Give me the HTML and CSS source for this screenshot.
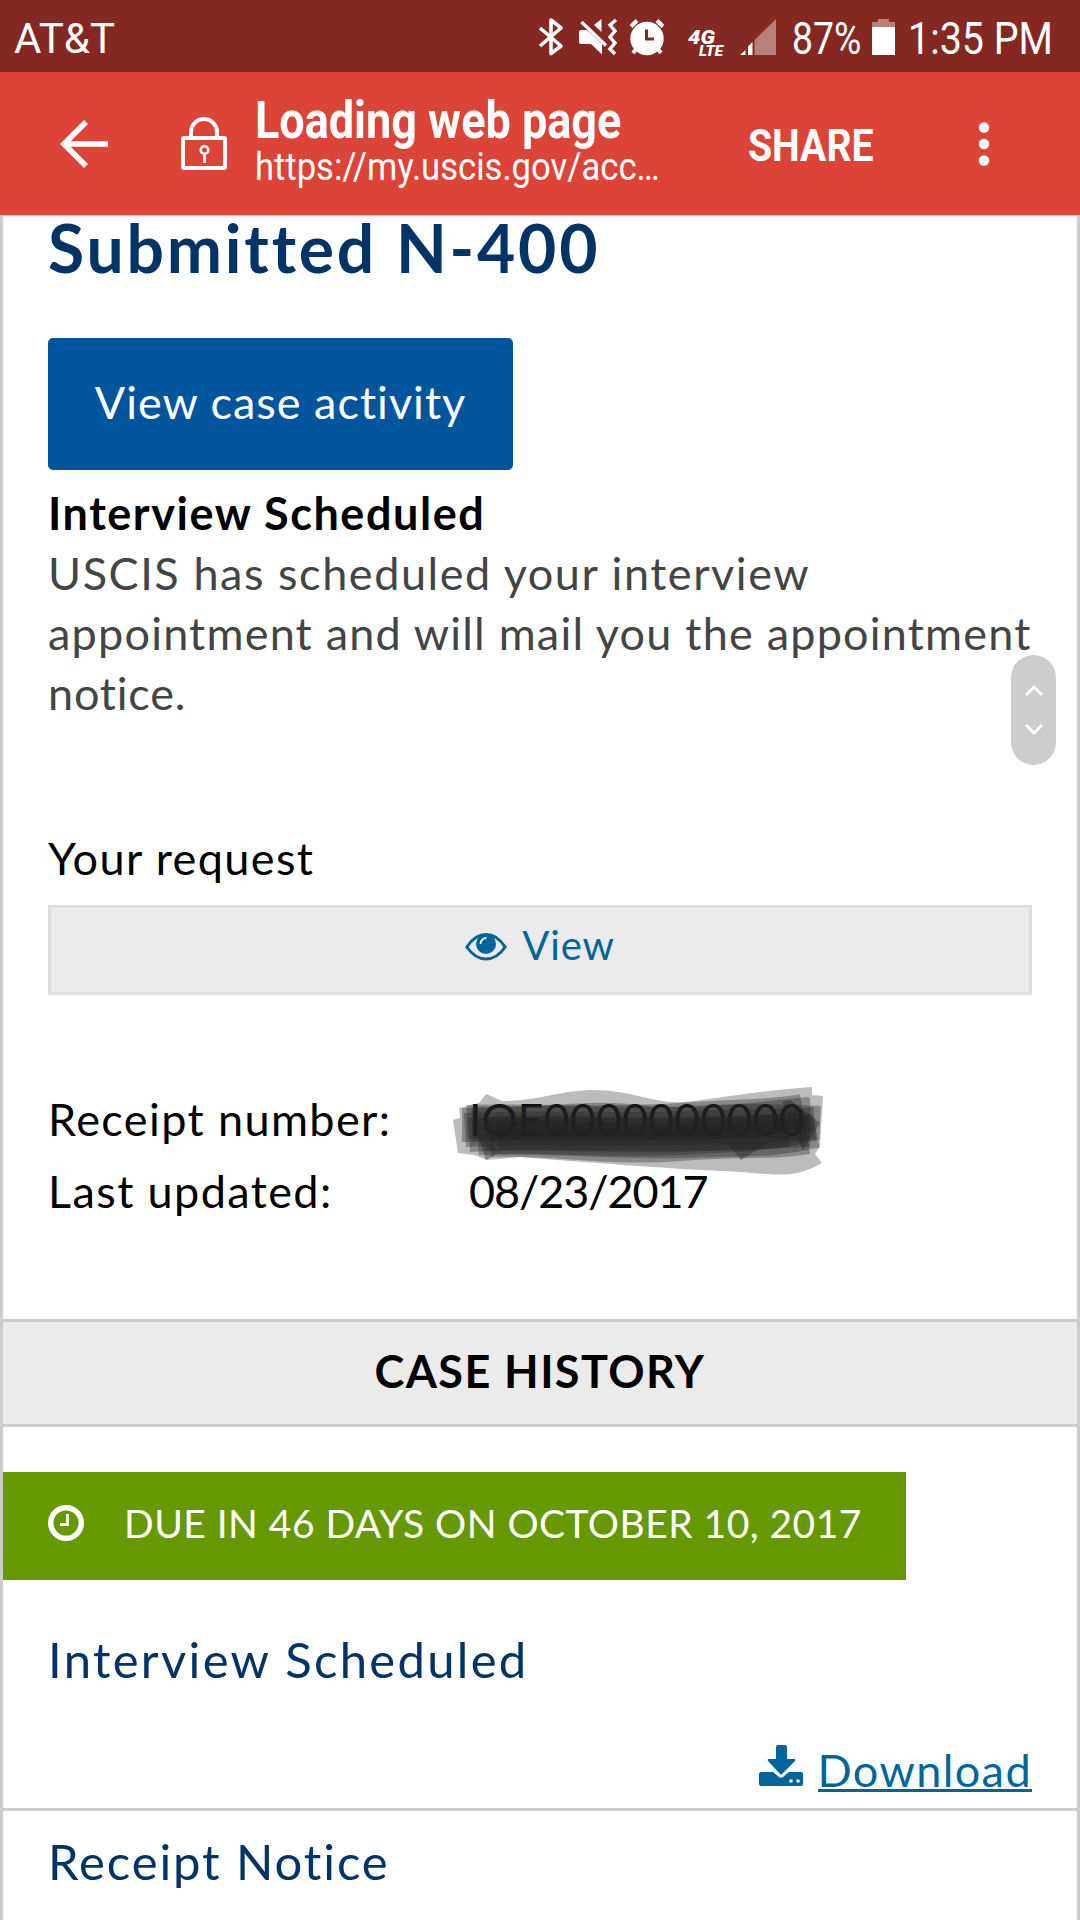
FILE: index.html
```html
<!DOCTYPE html>
<html lang="en">
<head>
    <meta charset="UTF-8">
    <meta name="viewport" content="width=device-width, initial-scale=1.0">
    <title>Submitted N-400</title>
    <link rel="stylesheet" href="styles.css">
</head>
<body>
    <div class="status-bar">
        <span class="carrier">AT&amp;T</span>
        <svg class="status-icons" width="280" height="72" viewBox="0 0 280 72">
            <path d="M20 28L41 46L31 53.500V20L41 28L20 46" fill="none" stroke="#fff" stroke-width="3.600" stroke-linejoin="round"/>
            <path d="M59 32q0-2 2-2h6l15 14v10.500L71 44h-10q-2 0-2-2zM74 25l7.500-6v13z" fill="#fff"/>
            <path d="M61.500 22L86 45.500" stroke="#fff" stroke-width="3.200"/>
            <path d="M96 20l-6 5 5 6-5 6 5 6-5 6 5 5" fill="none" stroke="#fff" stroke-width="3.400"/>
            <circle cx="127" cy="38.500" r="16.700" fill="#fff"/>
            <path d="M111 26.500l6-6M137 20.500l6 6M117 48l-4 5M137 48l4 5" stroke="#fff" stroke-width="4"/>
            <path d="M126.500 29.500v9.500h7.500" fill="none" stroke="#832922" stroke-width="3"/>
            <text x="168" y="43.500" class="net" font-size="20" textLength="27" lengthAdjust="spacingAndGlyphs">4G</text>
            <text x="179" y="55.500" class="net" font-size="14.500" textLength="24" lengthAdjust="spacingAndGlyphs">LTE</text>
            <path d="M256 19v36h-21.500V40z" fill="#b7807b"/>
            <path d="M220 55l5.500-5v5zM228 55v-8.500l4.500-4.500v13z" fill="#fff"/>
        </svg>
        <span class="percent">87%</span>
        <svg class="battery" width="23" height="37" viewBox="0 0 23 37">
            <path d="M0 3h6V0h11v3h6v5H0z" fill="#b7807b"/>
            <path d="M0 8h23v28H0z" fill="#fff"/>
        </svg>
        <span class="time">1:35 PM</span>
    </div>

    <div class="toolbar">
        <svg class="back" width="50" height="50" viewBox="0 0 50 50">
            <path d="M27 3L5 25l22 22M6 25h43" fill="none" stroke="#fff" stroke-width="5.600"/>
        </svg>
        <svg class="lock" width="46" height="54" viewBox="0 0 46 54">
            <rect x="2" y="21" width="42" height="30" rx="1" fill="none" stroke="#fff" stroke-width="4"/>
            <path d="M10 20v-5a13 13 0 0 1 26 0v5" fill="none" stroke="#fff" stroke-width="4"/>
            <circle cx="23.500" cy="33" r="3.800" fill="none" stroke="#fff" stroke-width="2.600"/>
            <path d="M23.500 36v10" stroke="#fff" stroke-width="3"/>
        </svg>
        <div class="page-info">
            <div class="page-title"><span>Loading web page</span></div>
            <div class="page-url"><span>https://my.uscis.gov/acc…</span></div>
        </div>
        <span class="share">SHARE</span>
        <svg class="more" width="12" height="46" viewBox="0 0 12 46">
            <circle cx="6" cy="6.500" r="5.200" fill="#fff"/>
            <circle cx="6" cy="23" r="5.200" fill="#fff"/>
            <circle cx="6" cy="39.500" r="5.200" fill="#fff"/>
        </svg>
    </div>

    <div class="page">
        <div class="case">
            <h1>Submitted N-400</h1>
            <a class="activity-button"><span>View case activity</span></a>
            <h2>Interview Scheduled</h2>
            <p class="description">
                <span class="line1">USCIS has scheduled your interview</span><br>
                <span class="line2">appointment and will mail you the appointment</span><br>
                <span class="line3">notice.</span>
            </p>
            <div class="label request">Your request</div>
            <a class="view-button">
                <svg width="42" height="28" viewBox="0 0 42 28">
                    <path d="M1.800 14Q10 1.500 21 1.500T40.200 14Q32 26 21 26T1.800 14z" fill="none" stroke="#069" stroke-width="3"/>
                    <circle cx="21" cy="11" r="10" fill="#069"/>
                    <path d="M15.500 11a6 6 0 0 1 6-6" fill="none" stroke="#ebebeb" stroke-width="2"/>
                </svg>
                <span>View</span>
            </a>
            <div class="details">
                <div class="row"><span class="label receipt">Receipt number:</span>
                    <span class="value hidden-number">IOE0000000000
                        <svg class="scribble" width="380" height="100" viewBox="0 0 380 100">
                            <path d="M36 10l16 7C90 17 110 6 145 6s60 14 88 12 70-11 129-15v8l11 1-3 50-5 8 7 9c-30 18-50 10-100 8S130 78 70 73L37 76 24 71 8 69 3 36l7-2-1-10 20-5z" fill="#222" fill-opacity=".3"/>
                            <g fill="none" stroke="#222" stroke-opacity=".34" stroke-width="34">
                                <path d="M12 41C90 42 140 31 190 38s110-3 171-8"/>
                                <path d="M17 38C90 36 160 41 230 36s90-3 123-9"/>
                                <path d="M22 40C110 37 170 42 240 39s80-2 130 0"/>
                                <path d="M15 46C90 42 160 47 230 44s90 0 135-4"/>
                                <path d="M19 51C90 47 160 53 230 51s90-4 130-5"/>
                                <path d="M35 50C100 46 160 52 230 50s90 0 120-7"/>
                                <path d="M28 54C100 51 160 59 230 57s90 0 136-10"/>
                                <path d="M40 56C100 53 160 66 230 60s90 0 127-7"/>
                                <path d="M48 53C100 51 160 58 230 54s70-3 108-8"/>
                            </g>
                            <path d="M276 58h44L291 76zM36 76L28 50l22 18zM332 18l8-2 30 23-17 27z" fill="#222" fill-opacity=".4"/>
                        </svg>
                    </span>
                </div>
                <div class="row"><span class="label updated">Last updated:</span><span class="value date">08/23/2017</span></div>
            </div>
        </div>

        <div class="history-title"><span>CASE HISTORY</span></div>

        <div class="due">
            <svg width="36" height="36" viewBox="0 0 36 36">
                <circle cx="18" cy="18" r="15.300" fill="none" stroke="#fff" stroke-width="5.400"/>
                <path d="M19.500 9v10.500H12" fill="none" stroke="#fff" stroke-width="3"/>
            </svg>
            <span>DUE IN 46 DAYS ON OCTOBER 10, 2017</span>
        </div>

        <div class="event">
            <h3 class="scheduled">Interview Scheduled</h3>
            <div class="download">
                <svg width="44" height="42" viewBox="0 0 44 42">
                    <path d="M19 0h7q2 0 2 2v12h7q2 0 1 2L23 29Q22 30 21 29L9 16q-1-2 1-2h7V2q0-2 2-2z" fill="#069"/>
                    <path d="M2 27h12l6 5q2 1.500 4 0l6-5h12q2 0 2 2v10q0 2-2 2H2q-2 0-2-2V29q0-2 2-2z" fill="#069"/>
                    <circle cx="32" cy="36" r="1.800" fill="#fff"/>
                    <circle cx="39" cy="36" r="1.800" fill="#fff"/>
                </svg>
                <a>Download</a>
            </div>
        </div>
        <div class="event">
            <h3 class="notice">Receipt Notice</h3>
        </div>

        <div class="scroller">
            <svg width="45" height="110" viewBox="0 0 45 110">
                <path d="M15 40l8-8 8 8M15 70l8 8 8-8" fill="none" stroke="#fff" stroke-width="3"/>
            </svg>
        </div>
    </div>
</body>
</html>
```
FILE: styles.css
```css
* {
    box-sizing: border-box;
}
body {
    margin: 0;
    width: 1080px;
    height: 1920px;
    overflow: hidden;
    background-color: #fff;
    font-family: Lato, "Open Sans", sans-serif;
    font-size: 45px;
    color: #000;
}
svg {
    display: block;
    flex-shrink: 0;
}
h1, h2, h3, p {
    margin: 0;
    font-weight: normal;
}
.status-bar {
    display: flex;
    align-items: center;
    height: 72px;
    background-color: #832922;
    color: #fff;
    font-family: Roboto, sans-serif;
    white-space: nowrap;
}
.status-bar span {
    transform-origin: left center;
    padding-top: 4px;
}
.status-bar .carrier {
    width: 120px;
    margin-right: 400px;
    padding-left: 14px;
    font-size: 42px;
}
.net {
    font-family: Roboto, sans-serif;
    font-weight: 900;
    font-style: italic;
    fill: #fff;
}
.percent {
    width: 80px;
    margin-left: -8px;
    font-size: 45px;
    transform: scaleX(0.83);
}
.battery {
    margin-top: 2px;
}
.time {
    margin-left: 13px;
    font-size: 45px;
    transform: scaleX(0.875);
}
.toolbar {
    display: flex;
    align-items: center;
    height: 144px;
    border-bottom: 1px solid #ccc;
    background-color: #dd4438;
    color: #fff;
    font-family: Roboto, sans-serif;
    white-space: nowrap;
}
.back {
    margin-left: 59px;
}
.lock {
    margin-left: 72px;
}
.page-info {
    width: 493px;
    margin-left: 28px;
    padding-bottom: 3px;
}
.page-info span {
    display: inline-block;
    transform-origin: left center;
}
.page-title {
    height: 50px;
    line-height: 50px;
    font-size: 52px;
    font-weight: bold;
}
.page-title span {
    transform: scaleX(0.865);
}
.page-url {
    height: 42px;
    line-height: 42px;
    font-size: 39px;
}
.page-url span {
    transform: scaleX(0.887);
}
.share {
    width: 230px;
    padding-top: 3px;
    font-size: 45px;
    font-weight: bold;
    transform: scaleX(0.87);
    transform-origin: left center;
}
.page {
    position: relative;
    height: 1704px;
    border-left: 3px solid #ccc;
    border-right: 3px solid #ccc;
}
.case {
    height: 1103px;
    padding: 0 45px;
}
h1 {
    height: 62px;
    line-height: 63px;
    font-size: 66px;
    font-weight: bold;
    letter-spacing: 2.8px;
    color: #036;
    white-space: nowrap;
}
.activity-button {
    display: flex;
    justify-content: center;
    width: 465px;
    height: 132px;
    margin-top: 60px;
    line-height: 128px;
    letter-spacing: 1px;
    border-radius: 5px;
    background-color: #00559c;
    color: #fff;
    white-space: nowrap;
}
h2 {
    margin-top: 13px;
    font-size: 45px;
    line-height: 60px;
    font-weight: bold;
    letter-spacing: 1.55px;
}
.description {
    line-height: 60px;
    color: #444;
    white-space: nowrap;
}
.line1 {
    letter-spacing: 1.55px;
}
.line2 {
    letter-spacing: 1.2px;
}
.line3 {
    letter-spacing: 0.8px;
}
.label {
    letter-spacing: 1.4px;
}
.request {
    margin-top: 105px;
    line-height: 60px;
}
.view-button {
    display: flex;
    justify-content: center;
    align-items: center;
    gap: 15px;
    height: 90px;
    margin-top: 17px;
    padding-bottom: 6px;
    border: 3px solid #ddd;
    background-color: #ebebeb;
    color: #069;
    font-size: 40px;
    letter-spacing: 0.9px;
}
.view-button span {
    padding-bottom: 4px;
}
.details {
    margin-top: 88px;
}
.row {
    display: flex;
    height: 72px;
    line-height: 72px;
    white-space: nowrap;
}
.row .label {
    width: 421px;
}
.date {
    letter-spacing: -1.1px;
}
.hidden-number {
    position: relative;
}
.scribble {
    position: absolute;
    left: -19px;
    top: 1px;
}
.history-title {
    display: flex;
    justify-content: center;
    height: 108px;
    line-height: 99px;
    border-top: 3px solid #ccc;
    border-bottom: 3px solid #ccc;
    background-color: #ebebeb;
    font-weight: bold;
    letter-spacing: 1.4px;
}
.due {
    display: flex;
    align-items: center;
    gap: 40px;
    width: 903px;
    height: 108px;
    margin-top: 45px;
    padding: 0 0 6px 45px;
    background-color: #690;
    color: #fff;
    font-size: 39px;
    letter-spacing: 0.47px;
    white-space: nowrap;
}
.event {
    height: 231px;
    padding: 49px 45px 0;
    border-bottom: 3px solid #ccc;
}
.event + .event {
    padding-top: 20px;
    border-bottom: none;
    height: 109px;
}
h3 {
    font-size: 49px;
    line-height: 60px;
    letter-spacing: 2.3px;
    color: #036;
}
.notice {
    letter-spacing: 1.9px;
}
.download {
    display: flex;
    justify-content: flex-end;
    gap: 15px;
    margin-top: 52px;
    color: #069;
    letter-spacing: 1.4px;
}
.download a {
    height: 51px;
    line-height: 58px;
    border-bottom: 3px solid #069;
}
.download svg {
    margin-top: 4px;
}
.scroller {
    position: absolute;
    left: 1008px;
    top: 439px;
    width: 45px;
    height: 110px;
    border-radius: 23px;
    background-color: #cdcdcd;
}
```
